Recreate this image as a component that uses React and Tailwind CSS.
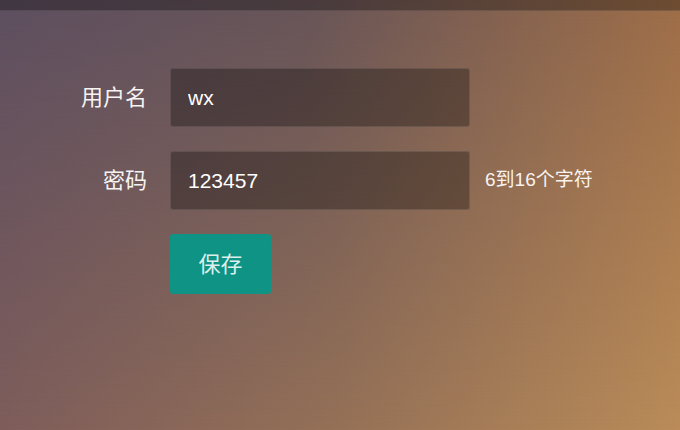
import { useState } from 'react';

const font = { fontFamily: '"Liberation Sans", "Noto Sans CJK SC", sans-serif' };

const Field = ({ label, value, onChange, hint }) => (
  <div className="flex items-center">
    <label className="w-[147px] text-right text-[22px] text-[#f6f3f2]">{label}</label>
    <input
      value={value}
      onChange={(e) => onChange(e.target.value)}
      className="ml-[23px] h-[59px] w-[300px] rounded-[3px] border border-white/10 bg-black/30 pl-[17px] pr-4 text-[21px] text-white outline-none"
    />
    {hint && <span className="ml-[15px] text-[19px] text-[#f8f3ef]">{hint}</span>}
  </div>
);

export default function App() {
  const [user, setUser] = useState('wx');
  const [pwd, setPwd] = useState('123457');

  return (
    <div className="grid h-[430px] w-full overflow-hidden bg-[linear-gradient(to_right,#7e5d5b,#957157_50%,#ba8c59)]" style={font}>
      {/* top row of the bilinear background, faded out downwards */}
      <div className="[grid-area:1/1] bg-[linear-gradient(to_right,#5d4f60,#675458_45%,#9d6d48)] [mask-image:linear-gradient(to_bottom,#000,transparent)]" />
      <div className="relative z-10 [grid-area:1/1] flex flex-col">
        <header className="h-[11px] border-b border-white/10 bg-black/30" />
        <form className="flex flex-col gap-[24px] pt-[57px]" onSubmit={(e) => e.preventDefault()}>
          <Field label="用户名" value={user} onChange={setUser} />
          <Field label="密码" value={pwd} onChange={setPwd} hint="6到16个字符" />
          <div className="pl-[170px]">
            <button className="h-[60px] w-[101px] rounded-[3px] bg-[#0e9384] text-[22px] text-[#dcefec]">保存</button>
          </div>
        </form>
      </div>
    </div>
  );
}
